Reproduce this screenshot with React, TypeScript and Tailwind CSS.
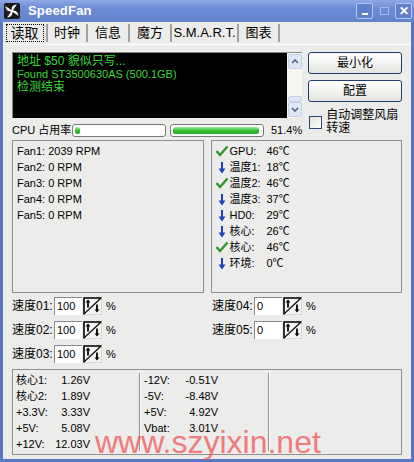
import React from "react"

const Check = () => (
  <svg width="14" height="12" viewBox="0 0 14 12">
    <path d="M1.5 6 L5 10 L12.5 1.5" fill="none" stroke="#2f962f" strokeWidth="2.4" />
  </svg>
)

const Down = () => (
  <svg width="14" height="13" viewBox="0 0 14 13">
    <path d="M7 1 V9" stroke="#1f3fbf" strokeWidth="2" />
    <path d="M3.5 7.5 L7 12.5 L10.5 7.5 Z" fill="#1f3fbf" />
  </svg>
)

const Spinner = () => (
  <svg width="19" height="18" viewBox="0 0 19 18">
    <rect x="0.5" y="0.5" width="18" height="17" fill="#f4f4f2" stroke="#d6d6d6" />
    <path d="M1 17.5 V1 H18.5" stroke="#000" strokeWidth="1.6" fill="none" />
    <path d="M1.5 16.5 L17.5 1.5" stroke="#000" strokeWidth="1.1" />
    <path d="M5 10.5 V4.5" stroke="#000" strokeWidth="1.8" />
    <path d="M2.5 5.5 L5 2.5 L7.5 5.5 Z" fill="#000" />
    <path d="M14 7.5 V13.5" stroke="#000" strokeWidth="1.8" />
    <path d="M11.5 12.5 L14 15.5 L16.5 12.5 Z" fill="#000" />
  </svg>
)

const ScrollBtn = ({ up }: { up: boolean }) => (
  <div className="w-[14px] h-[15px] rounded-[2px] border border-[#c3d0e8] bg-[#dfe7f5] flex items-center justify-center">
    <svg width="8" height="5" viewBox="0 0 8 5">
      <path d={up ? "M1 4 L4 1 L7 4" : "M1 1 L4 4 L7 1"} stroke="#4d6185" strokeWidth="1.6" fill="none" />
    </svg>
  </div>
)

const FanLogo = () => (
  <svg width="16" height="16" viewBox="0 0 16 16">
    <rect x="0" y="0" width="16" height="16" rx="2" fill="#1b1b1b" />
    {[0, 90, 180, 270].map((r) => (
      <path
        key={r}
        d="M8 8 C7 5 8 2 13 1.5 C11 3.5 10.5 6 8 8 Z"
        fill="#fff"
        transform={`rotate(${r} 8 8)`}
      />
    ))}
    <circle cx="8" cy="8" r="1.6" fill="#fff" />
  </svg>
)

const Bar = ({ fill }: { fill: number }) => (
  <div className="w-[94px] h-[13px] rounded-[3px] border border-[#7a7a7a] bg-white p-[2px]">
    <div
      className="h-full rounded-[2px] bg-[linear-gradient(to_bottom,#9ef09e,#35c035_50%,#2aa82a)]"
      style={{ width: `${fill}%` }}
    />
  </div>
)

const SpeedRow = ({ label, value }: { label: string; value: string }) => (
  <div className="flex items-center h-[18px]">
    <span className="w-[42px] text-[12px]">{label}</span>
    <div className="w-[28px] h-[18px] bg-white border-t border-l border-[#8a8a8a] pl-[2px] leading-[17px] text-[11px]">
      {value}
    </div>
    <div className="ml-[1px]">
      <Spinner />
    </div>
    <span className="ml-[4px] text-[11px]">%</span>
  </div>
)

const temps = [
  [true, "GPU:", "46℃"],
  [false, "温度1:", "18℃"],
  [true, "温度2:", "46℃"],
  [false, "温度3:", "37℃"],
  [false, "HD0:", "29℃"],
  [false, "核心:", "26℃"],
  [true, "核心:", "46℃"],
  [false, "环境:", "0℃"],
] as const

const fans = ["Fan1: 2039 RPM", "Fan2: 0 RPM", "Fan3: 0 RPM", "Fan4: 0 RPM", "Fan5: 0 RPM"]

const voltsA = [
  ["核心1:", "1.26V"],
  ["核心2:", "1.89V"],
  ["+3.3V:", "3.33V"],
  ["+5V:", "5.08V"],
  ["+12V:", "12.03V"],
]

const voltsB = [
  ["-12V:", "-0.51V"],
  ["-5V:", "-8.48V"],
  ["+5V:", "4.92V"],
  ["Vbat:", "3.01V"],
]

const tabs = [
  { name: "读取", w: "w-[45px]" },
  { name: "时钟", w: "w-[40px]" },
  { name: "信息", w: "w-[42px]" },
  { name: "魔方", w: "w-[42px]" },
  { name: "S.M.A.R.T.", w: "w-[67px]" },
  { name: "图表", w: "w-[41px]" },
]

export default function App() {
  return (
    <div className="relative w-[414px] h-[462px] flex flex-col overflow-hidden bg-[#ececea] text-black font-['Liberation_Sans','Noto_Sans_CJK_SC',sans-serif] text-[11px]">
      {/* title bar */}
      <div className="h-[22px] flex items-center pl-[4px] pr-[2px] bg-[linear-gradient(to_bottom,#8ea8e4,#6c8bd3_40%,#6282cd)]">
        <FanLogo />
        <span className="ml-[8px] text-[13px] font-bold text-white tracking-[0.2px]">SpeedFan</span>
        <div className="ml-auto flex items-center gap-[3px]">
          <div className="w-[17px] h-[16px] rounded-[2px] border border-[#b7c8ee] bg-[#5f7fcb] flex items-end justify-center pb-[3px]">
            <div className="w-[6px] h-[2px] bg-white" />
          </div>
          <div className="w-[16px] h-[16px] flex items-center justify-center">
            <div className="w-[9px] h-[8px] border border-[#a9bce8]" />
          </div>
          <div className="w-[17px] h-[16px] rounded-[2px] border border-[#b7c8ee] bg-[#5f7fcb] flex items-center justify-center text-white text-[12px] font-bold leading-none">
            ✕
          </div>
        </div>
      </div>

      {/* body */}
      <div className="flex-1 flex flex-col border-x-[3px] border-b-[3px] border-[#5878c6]">
        {/* tabs */}
        <div className="h-[22px] flex items-stretch">
          {tabs.map((t, i) => (
            <div
              key={t.name}
              className={`${t.w} flex items-center justify-center border-r-2 border-[#a0a0a0] my-[2px] ${i === 0 ? "text-[14px]" : "text-[13px]"}`}
            >
              {i === 0 ? (
                <span className="border border-dotted border-black px-[4px] leading-[16px]">{t.name}</span>
              ) : (
                <span>{t.name}</span>
              )}
            </div>
          ))}
        </div>

        <div className="flex-1 flex flex-col border-t border-white px-[9px] pt-[7px]">
          {/* top section */}
          <div className="flex">
            <div className="w-[292px] flex flex-col">
              <div className="w-[290px] h-[66px] flex bg-black border-t border-l border-[#8a8a8a]">
                <div className="flex-1 pl-[4px] pt-[2px] text-[#3bd63b] text-[12px] leading-[13px]">
                  <div>地址 $50 貌似只写...</div>
                  <div className="text-[11px]">Found ST3500630AS (500.1GB)</div>
                  <div>检测结束</div>
                </div>
                <div className="w-[15px] bg-[#f6f6f3] flex flex-col items-center pt-[1px] pb-[1px]">
                  <ScrollBtn up />
                  <div className="flex-1" />
                  <div className="w-[14px] h-[6px] rounded-[2px] border border-[#c3d0e8] bg-[#dfe7f5]" />
                  <ScrollBtn up={false} />
                </div>
              </div>
              <div className="mt-[5px] h-[14px] flex items-center">
                <span className="w-[60px] whitespace-nowrap text-[11px] leading-none">CPU 占用率</span>
                <Bar fill={6} />
                <div className="ml-[4px]">
                  <Bar fill={98} />
                </div>
                <span className="ml-[7px] text-[11px]">51.4%</span>
              </div>
            </div>

            <div className="ml-[6px] w-[95px] flex flex-col">
              <div className="h-[22px] rounded-[3px] border border-[#1f3e6e] bg-[linear-gradient(to_bottom,#ffffff,#f0f0ee_60%,#e2e2de)] flex items-center justify-center text-[12px]">
                最小化
              </div>
              <div className="mt-[6px] h-[22px] rounded-[3px] border border-[#1f3e6e] bg-[linear-gradient(to_bottom,#ffffff,#f0f0ee_60%,#e2e2de)] flex items-center justify-center text-[12px]">
                配置
              </div>
              <div className="mt-[7px] flex items-center">
                <div className="ml-[1px] w-[13px] h-[13px] border border-[#2a4a7a] bg-[linear-gradient(135deg,#e0e0da,#ffffff)]" />
                <div className="ml-[4px] text-[12px] leading-[13px]">
                  <div>自动调整风扇</div>
                  <div>转速</div>
                </div>
              </div>
            </div>
          </div>

          {/* panels */}
          <div className="mt-[3px] flex gap-[7px]">
            <div className="w-[193px] h-[153px] border border-[#8f8f8f] pl-[4px] pt-[2px]">
              {fans.map((f) => (
                <div key={f} className="h-[16px] leading-[16px]">
                  {f}
                </div>
              ))}
            </div>
            <div className="w-[193px] h-[153px] border border-[#8f8f8f] pl-[3px] pt-[2px]">
              {temps.map(([ok, label, val], i) => (
                <div key={i} className="h-[16px] flex items-center">
                  <div className="w-[15px] flex justify-center">{ok ? <Check /> : <Down />}</div>
                  <span className="w-[37px] text-[11px]">{label}</span>
                  <span className="text-[11px]">{val}</span>
                </div>
              ))}
            </div>
          </div>

          {/* speeds */}
          <div className="mt-[4px] grid grid-cols-[200px_193px] gap-y-[6px]">
            <SpeedRow label="速度01:" value="100" />
            <SpeedRow label="速度04:" value="0" />
            <SpeedRow label="速度02:" value="100" />
            <SpeedRow label="速度05:" value="0" />
            <SpeedRow label="速度03:" value="100" />
          </div>

          {/* voltages */}
          <div className="mt-[6px] h-[86px] flex border border-[#8f8f8f]">
            <div className="w-[126px] pl-[3px] pt-[2px]">
              {voltsA.map(([l, v]) => (
                <div key={l} className="h-[16px] flex items-center">
                  <span className="w-[38px]">{l}</span>
                  <span className="w-[36px] text-right">{v}</span>
                </div>
              ))}
            </div>
            <div className="my-[3px] w-[2px] border-l border-r border-l-[#8f8f8f] border-r-white" />
            <div className="w-[127px] pl-[3px] pt-[2px]">
              {voltsB.map(([l, v]) => (
                <div key={l} className="h-[16px] flex items-center">
                  <span className="w-[40px]">{l}</span>
                  <span className="w-[34px] text-right">{v}</span>
                </div>
              ))}
            </div>
            <div className="my-[3px] w-[2px] border-l border-r border-l-[#8f8f8f] border-r-white" />
            <div className="flex-1" />
          </div>
        </div>
      </div>

      {/* watermark */}
      <div className="absolute left-[95px] top-[426px] text-[32px] leading-[32px] text-[#f06060] opacity-80 font-['Liberation_Sans',sans-serif] pointer-events-none">
        www.szyixin.net
      </div>
    </div>
  )
}
